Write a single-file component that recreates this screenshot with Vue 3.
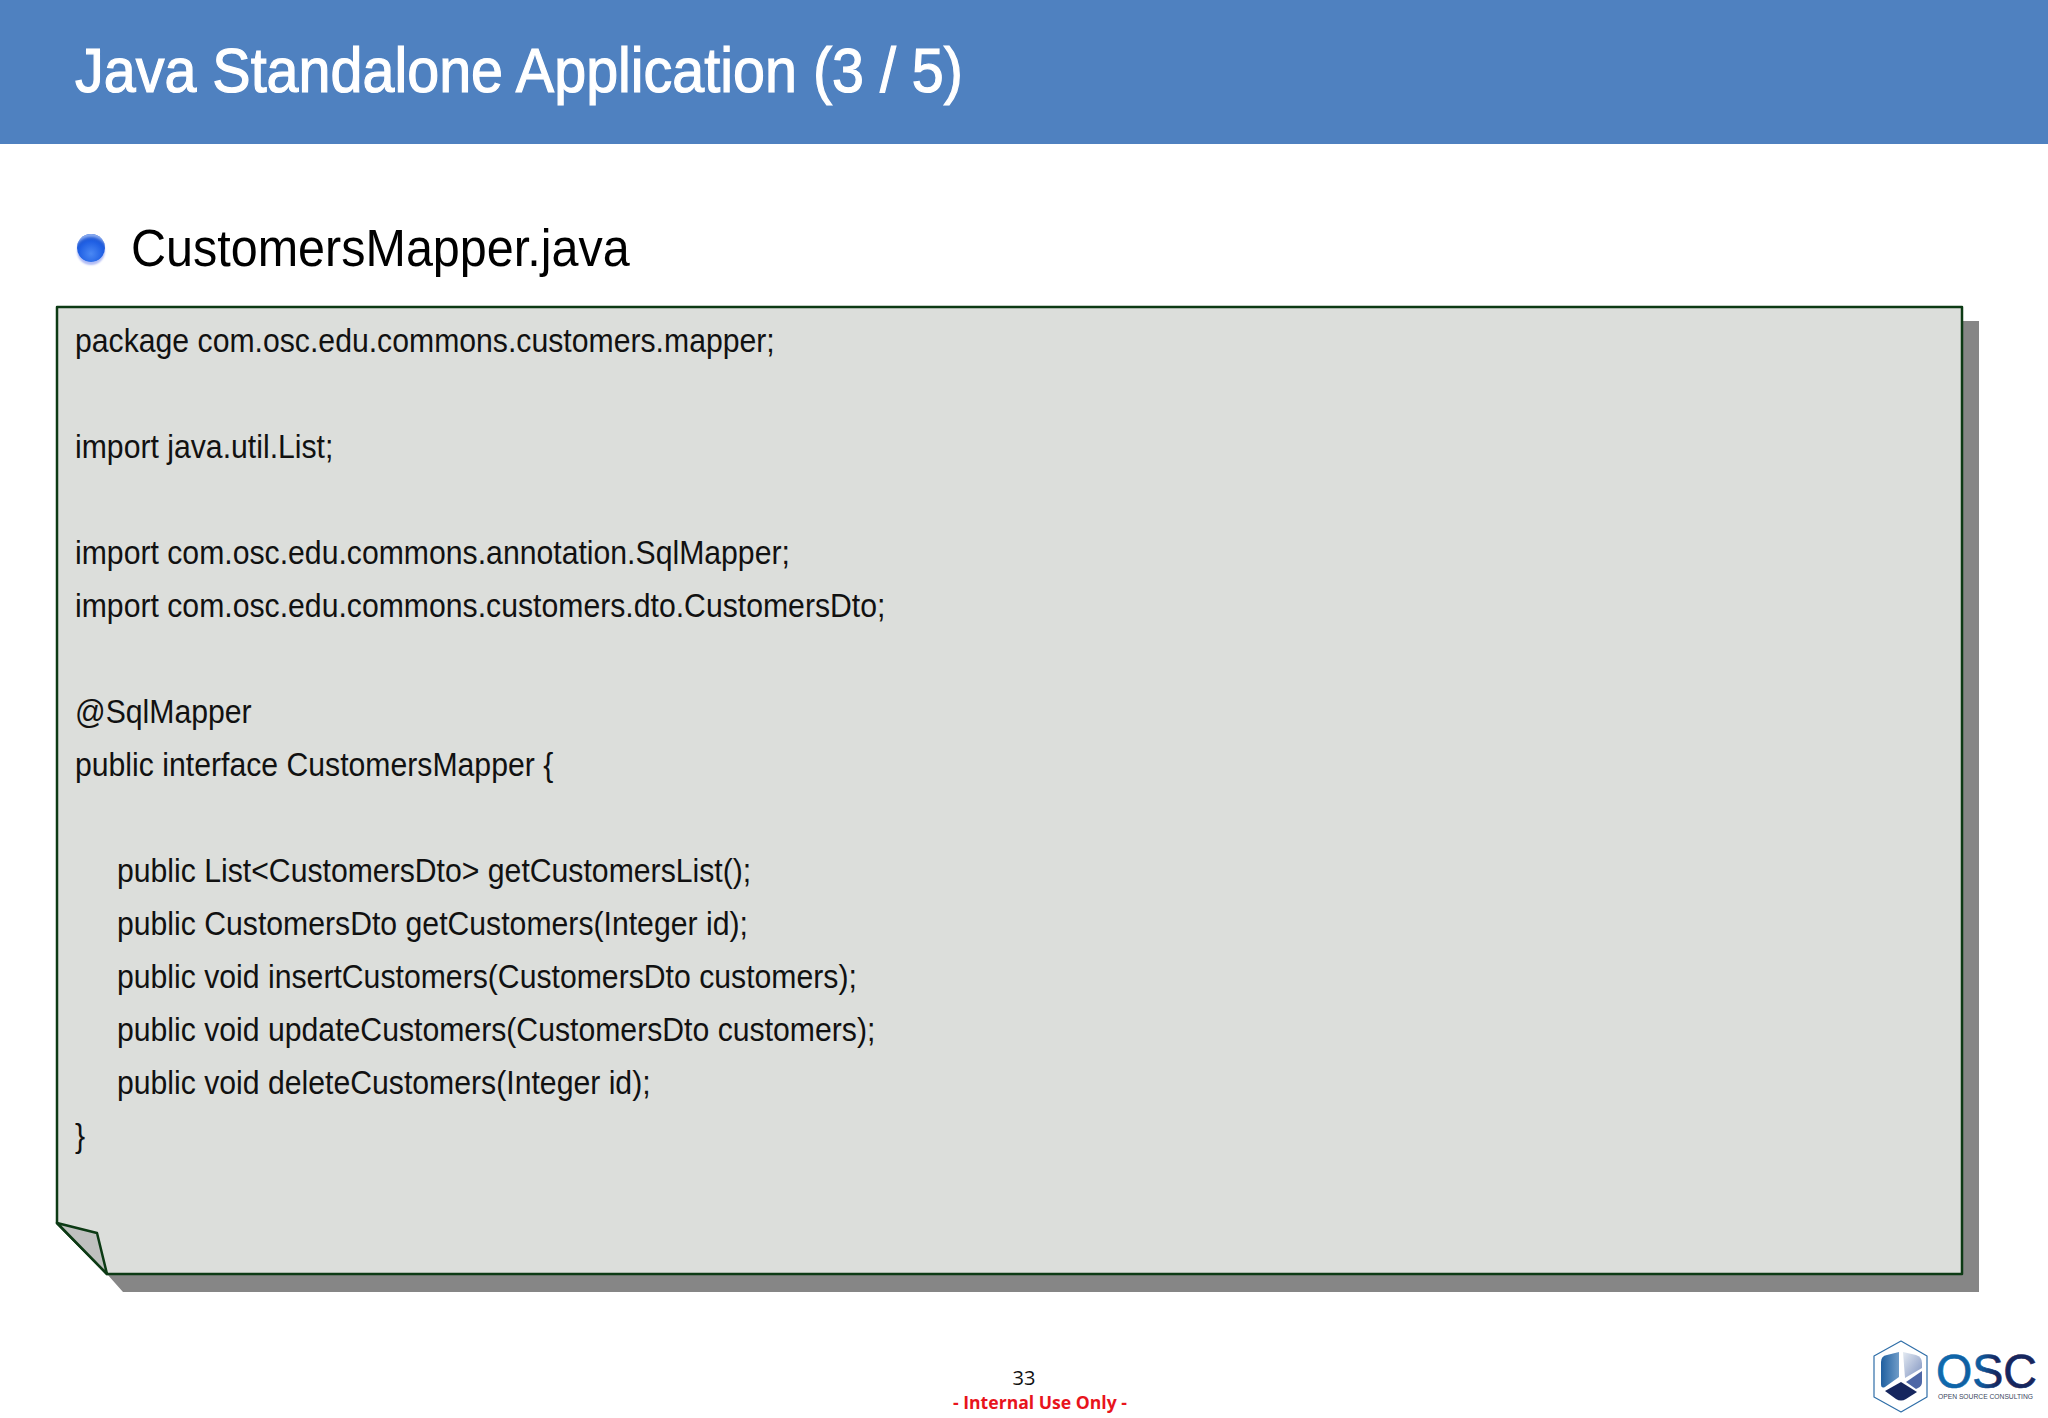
<template>
  <div class="slide">
    <header class="title-bar">
      <h1>Java Standalone Application (3 / 5)</h1>
    </header>

    <div class="bullet-row">
      <span class="bullet"></span>
      <h2>CustomersMapper.java</h2>
    </div>

    <section class="note">
      <svg class="note-bg" width="1930" height="992" viewBox="0 0 1930 992">
        <polygon points="52,969 68,987 1924,987 1924,16 1906,16 1906,969" fill="#868686" />
        <polygon points="2,2 1907,2 1907,969 52,969 2,918" fill="#dcdedb" stroke="#0c3a14" stroke-width="2.5" stroke-linejoin="round" />
        <polygon points="2,918 42,928 52,969" fill="#bfc0bf" stroke="#0c3a14" stroke-width="2.5" stroke-linejoin="round" />
      </svg>
      <pre class="code">{{ code }}</pre>
    </section>

    <footer class="foot">
      <div class="foot-text">
        <div class="page-num">33</div>
        <div class="notice">- Internal Use Only -</div>
      </div>
      <svg class="logo" width="208" height="98" viewBox="0 0 208 98">
        <defs>
          <linearGradient id="leftFace" x1="0" y1="0" x2="1" y2="0">
            <stop offset="0" stop-color="#1f5fa0" />
            <stop offset="1" stop-color="#6f9cc8" />
          </linearGradient>
          <linearGradient id="rightFace" x1="0" y1="0" x2="1" y2="1">
            <stop offset="0" stop-color="#e4eaf2" />
            <stop offset="1" stop-color="#7f93c0" />
          </linearGradient>
          <linearGradient id="osc" x1="0" y1="0" x2="1" y2="0">
            <stop offset="0" stop-color="#0f6cb0" />
            <stop offset="0.45" stop-color="#0f5a9c" />
            <stop offset="0.6" stop-color="#16265e" />
            <stop offset="1" stop-color="#16265e" />
          </linearGradient>
        </defs>
        <polygon points="61,21 87,36 87,77 61,92 34,77 34,36" fill="#fff" stroke="#2f6ea8" stroke-width="1.2" stroke-linejoin="round" />
        <path d="M59,32 L59,57 L45,67 Q41,69 41,64 L41,42 Q41,36 47,35 Z" fill="url(#leftFace)" />
        <path d="M63,32 L76,35 Q82,37 82,43 L82,48 L65,58 Z" fill="url(#rightFace)" />
        <path d="M66,62 L82,51 L82,62 Q82,66 78,68 L76,69 Z" fill="#4e67a6" />
        <path d="M61,62 L77,72 L66,79 Q61,82 56,79 L45,71 Z" fill="#16265e" />
        <text x="96" y="68" class="osc-mark" textLength="101" lengthAdjust="spacingAndGlyphs" fill="url(#osc)" stroke="url(#osc)" stroke-width="0.7">OSC</text>
        <text x="98" y="79" class="osc-tag" textLength="95" lengthAdjust="spacingAndGlyphs">OPEN SOURCE CONSULTING</text>
      </svg>
    </footer>
  </div>
</template>

<script setup>
const code = `package com.osc.edu.commons.customers.mapper;

import java.util.List;

import com.osc.edu.commons.annotation.SqlMapper;
import com.osc.edu.commons.customers.dto.CustomersDto;

@SqlMapper
public interface CustomersMapper {

     public List<CustomersDto> getCustomersList();
     public CustomersDto getCustomers(Integer id);
     public void insertCustomers(CustomersDto customers);
     public void updateCustomers(CustomersDto customers);
     public void deleteCustomers(Integer id);
}`
</script>

<style>
html, body {
  background: #fff;
}
</style>

<style scoped>
.slide {
  width: 2048px;
  height: 1418px;
  overflow: hidden;
  background: #fff;
  font-family: "Liberation Sans", Arial, sans-serif;
  display: flex;
  flex-direction: column;
}

.title-bar {
  height: 144px;
  box-sizing: border-box;
  padding: 0 0 2px 75px;
  background: #4f81c0;
  display: flex;
  align-items: center;
}

.title-bar h1 {
  margin: 0;
  color: #fff;
  font-size: 63px;
  font-weight: 400;
  -webkit-text-stroke: 1.2px #fff;
  line-height: 1;
  white-space: nowrap;
  transform: scaleX(0.912);
  transform-origin: left center;
}

.bullet-row {
  display: flex;
  align-items: center;
  box-sizing: border-box;
  height: 161px;
  padding: 48px 0 0 77px;
  gap: 26px;
}

.bullet {
  width: 28px;
  height: 28px;
  border-radius: 50%;
  background: radial-gradient(circle at 50% 70%, #4a88f4 0%, #2060e4 50%, #1a46b8 100%);
  box-shadow: inset 0 6px 3px -3px #8fb0f2, 0 3px 2px #b3bdf5;
}

.bullet-row h2 {
  margin: 0;
  color: #000;
  font-size: 51px;
  font-weight: 400;
  line-height: 1;
  white-space: nowrap;
  transform: scaleX(0.951);
  transform-origin: left center;
}

.note {
  position: relative;
  margin-left: 55px;
  width: 1930px;
  height: 992px;
}

.note-bg {
  position: absolute;
  left: 0;
  top: 0;
}

.code {
  position: relative;
  margin: 0;
  padding: 9px 0 0 20px;
  font-family: "Liberation Sans", Arial, sans-serif;
  font-size: 34px;
  line-height: 53px;
  color: #111;
  white-space: pre;
  transform: scaleX(0.888);
  transform-origin: 20px 0;
}

.foot {
  flex: 1;
  display: flex;
  justify-content: space-between;
  padding-left: 953px;
}

.foot-text {
  padding-top: 69px;
}

.page-num {
  width: 142px;
  text-align: center;
  font-family: "Open Sans", sans-serif;
  font-size: 20px;
  line-height: 26px;
  color: #111;
}

.notice {
  font-family: "Open Sans", sans-serif;
  font-size: 17.6px;
  font-weight: 700;
  line-height: 22px;
  color: #e8141c;
  white-space: nowrap;
}

.logo {
  margin-top: 24px;
}

.osc-mark {
  font-family: "Liberation Sans", Arial, sans-serif;
  font-size: 48px;
  font-weight: 400;
}

.osc-tag {
  font-family: "Liberation Sans", Arial, sans-serif;
  font-size: 7px;
  fill: #3a4660;
}
</style>
